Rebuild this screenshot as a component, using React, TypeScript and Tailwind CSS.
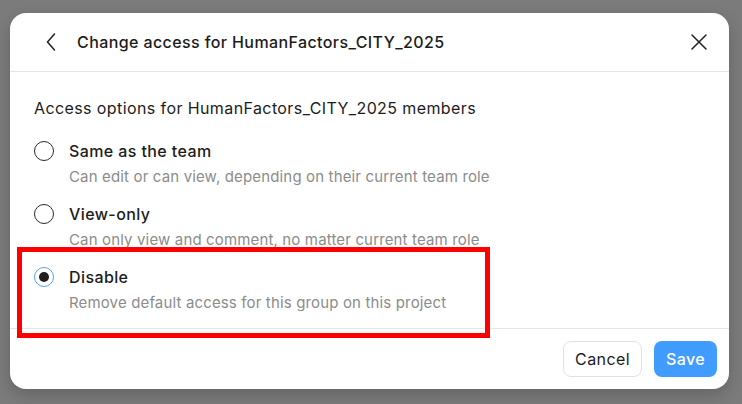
import { type JSX } from "react";

interface AccessOption {
  label: string;
  description: string;
  selected?: boolean;
}

const options: AccessOption[] = [
  {
    label: "Same as the team",
    description: "Can edit or can view, depending on their current team role",
  },
  {
    label: "View-only",
    description: "Can only view and comment, no matter current team role",
  },
  {
    label: "Disable",
    description: "Remove default access for this group on this project",
    selected: true,
  },
];

function Radio({ selected }: { selected?: boolean }): JSX.Element {
  if (selected) {
    return (
      <span className="flex h-5 w-5 shrink-0 items-center justify-center rounded-full border-[1.5px] border-[#4fa3ff]">
        <span className="h-[10px] w-[10px] rounded-full bg-[#1f1f1f]" />
      </span>
    );
  }
  return <span className="h-5 w-5 shrink-0 rounded-full border-[1.5px] border-[#2a2a2a]" />;
}

export default function App(): JSX.Element {
  return (
    <div
      className="flex h-[404px] w-[742px] items-start bg-[#7b7b7b] px-[10px] pt-[13px]"
      style={{ fontFamily: "Inter, 'Noto Sans', sans-serif" }}
    >
      <div className="relative flex w-[719px] flex-col rounded-2xl bg-white shadow-[0_6px_16px_rgba(0,0,0,0.18)]">
        {/* Header */}
        <div className="flex h-[59px] items-center border-b border-[#e6e6e6] pl-[36px] pr-[21px]">
          <svg width="10" height="18" viewBox="0 0 10 18" fill="none" className="shrink-0">
            <path d="M8.5 1 L1.5 9 L8.5 17" stroke="#222" strokeWidth="1.5" strokeLinecap="round" strokeLinejoin="round" />
          </svg>
          <h2 className="ml-[21px] flex-1 text-base font-medium tracking-[0.025em] text-[#1c1c1c]">
            Change access for HumanFactors_CITY_2025
          </h2>
          <svg width="18" height="18" viewBox="0 0 18 18" fill="none" className="shrink-0">
            <path d="M2 2 L16 16 M16 2 L2 16" stroke="#222" strokeWidth="1.5" strokeLinecap="round" />
          </svg>
        </div>

        {/* Body */}
        <div className="flex flex-col px-6 pt-6 pb-[15px]">
          <p className="text-base leading-6 tracking-[0.025em] text-[#1c1c1c]">
            Access options for HumanFactors_CITY_2025 members
          </p>
          <div className="mt-[19px] flex flex-col gap-[15px]">
            {options.map((opt) => (
              <div key={opt.label} className="flex flex-col">
                <div className="flex items-center gap-[15px]">
                  <Radio selected={opt.selected} />
                  <span className="text-base font-medium leading-6 tracking-[0.025em] text-[#1c1c1c]">
                    {opt.label}
                  </span>
                </div>
                <span className="mt-1 pl-[35px] text-[15px] leading-5 tracking-[0.01em] text-[#8c8c8c]">
                  {opt.description}
                </span>
              </div>
            ))}
          </div>
        </div>

        {/* Footer */}
        <div className="flex justify-end gap-3 border-t border-[#e6e6e6] px-3 py-3">
          <button className="h-9 rounded-lg border border-[#e2e2e2] px-[11px] text-base tracking-[0.025em] text-[#1c1c1c]">
            Cancel
          </button>
          <button className="h-9 rounded-lg bg-[#409cff] px-3 text-base font-medium tracking-[0.025em] text-white">
            Save
          </button>
        </div>

        {/* Annotation highlight */}
        <div className="absolute left-[7px] top-[234px] h-[91px] w-[473px] border-[5px] border-[#ff0000]" />
      </div>
    </div>
  );
}
